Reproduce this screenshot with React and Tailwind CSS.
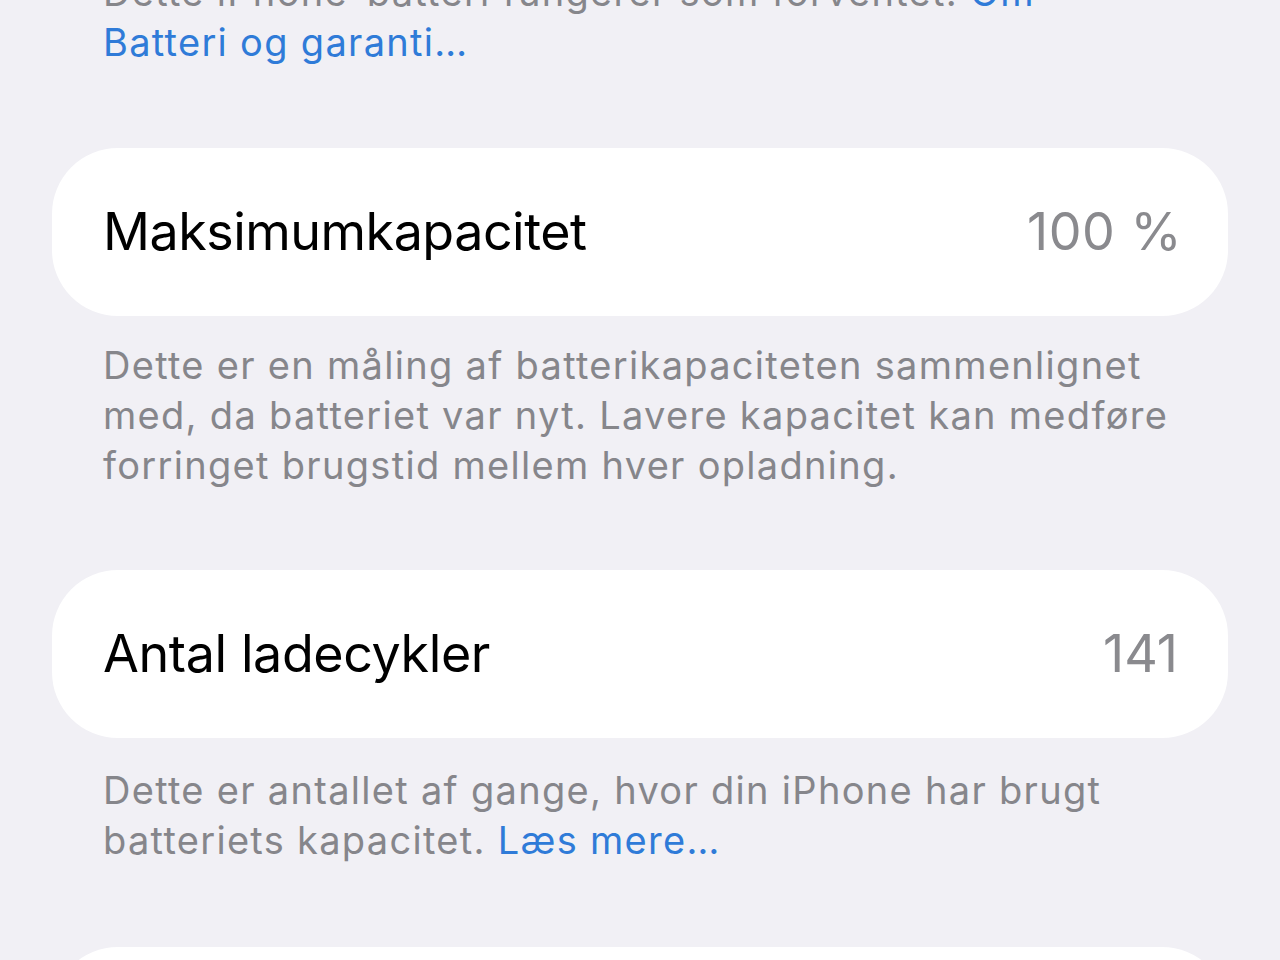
export default function App() {
  const font = { fontFamily: "Inter, 'Noto Sans', sans-serif" };
  return (
    <div
      className="w-[1280px] h-[960px] overflow-hidden bg-[#f1f0f5] antialiased"
      style={font}
    >
      <div className="flex flex-col px-[52px]">
        {/* battery health footer, scrolled partly out of view */}
        <div className="-mt-[33px] pl-[51px] text-[38px] leading-[50px] tracking-[1.3px] text-[#86868b] whitespace-nowrap">
          Dette iPhone-batteri fungerer som forventet.{" "}
          <span className="text-[#2f7bd8]">Om</span>
          <br />
          <span className="text-[#2f7bd8]">Batteri og garanti…</span>
        </div>

        {/* maximum capacity */}
        <div className="mt-[81px] h-[168px] rounded-[66px] bg-white flex items-center justify-between pl-[51px] pr-[50px]">
          <span className="text-[52px] text-black tracking-[-0.5px]">Maksimumkapacitet</span>
          <span className="text-[52px] text-[#8a8a8e] tracking-[0.5px] -mr-[4px]">100 %</span>
        </div>
        <p className="mt-[24px] pl-[51px] text-[38px] leading-[50px] tracking-[1.3px] text-[#86868b] whitespace-nowrap">
          Dette er en måling af batterikapaciteten sammenlignet
          <br />
          med, da batteriet var nyt. Lavere kapacitet kan medføre
          <br />
          forringet brugstid mellem hver opladning.
        </p>

        {/* charge cycles */}
        <div className="mt-[80px] h-[168px] rounded-[66px] bg-white flex items-center justify-between pl-[51px] pr-[50px]">
          <span className="text-[52px] text-black tracking-[-0.4px]">Antal ladecykler</span>
          <span className="text-[52px] text-[#8a8a8e]">141</span>
        </div>
        <p className="mt-[27px] pl-[51px] text-[38px] leading-[50px] tracking-[1.3px] text-[#86868b] whitespace-nowrap">
          Dette er antallet af gange, hvor din iPhone har brugt
          <br />
          batteriets kapacitet.{" "}
          <span className="text-[#2f7bd8]">Læs mere…</span>
        </p>

        {/* next section, cut off at the bottom */}
        <div className="mt-[82px] h-[168px] rounded-[66px] bg-white" />
      </div>
    </div>
  );
}
